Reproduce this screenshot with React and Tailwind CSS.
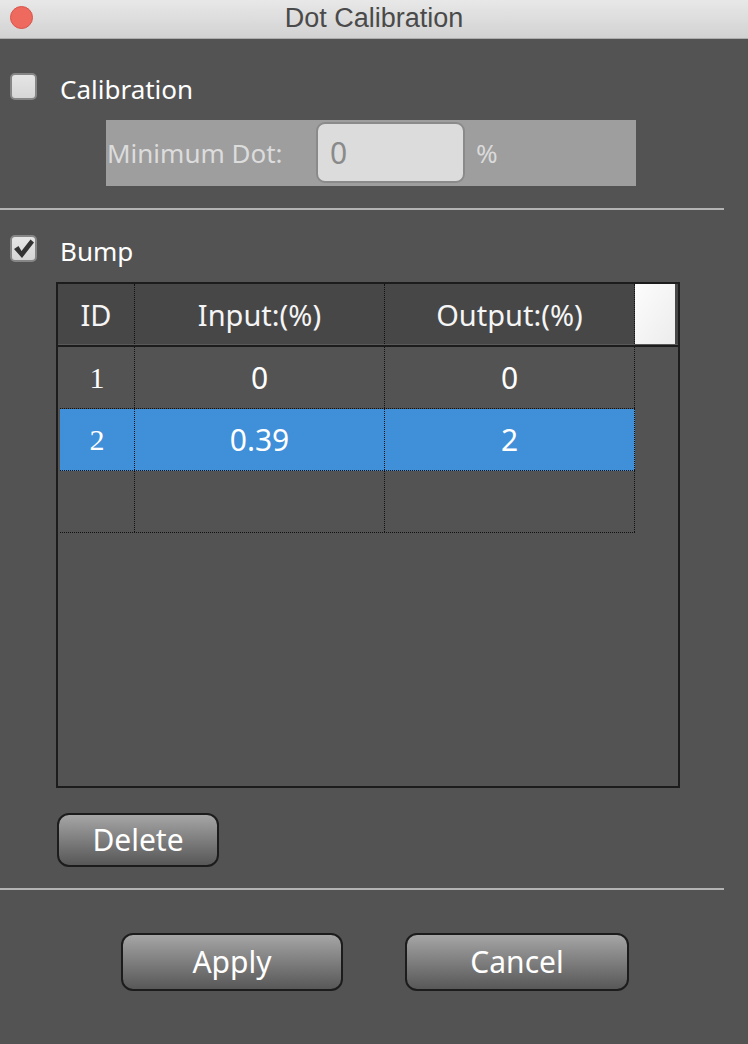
import React from 'react';

function CheckBox({ checked }) {
  return (
    <div className="w-[27px] h-[27px] shrink-0 rounded-[5px] border-2 border-[#868686] bg-gradient-to-b from-[#e6e6e6] to-[#d6d6d6] flex items-center justify-center">
      {checked && (
        <svg width="23" height="23" viewBox="0 0 23 23">
          <path d="M2 12 L6.5 9 L9.5 14 L18.5 2.5 L22 5.5 L10 21 Z" fill="#333333" />
        </svg>
      )}
    </div>
  );
}

function GrayButton({ label, className }) {
  return (
    <button
      className={`h-full rounded-[12px] border-2 border-[#1c1c1c] bg-gradient-to-b from-[#a6a6a6] to-[#585858] text-white text-[30px] leading-none flex items-center justify-center ${className}`}
    >
      {label}
    </button>
  );
}

const rows = [
  { id: '1', input: '0', output: '0' },
  { id: '2', input: '0.39', output: '2', selected: true },
  { id: '', input: '', output: '' },
];

export default function App() {
  return (
    <div className="w-[748px] h-[1044px] bg-[#535353] flex flex-col overflow-hidden font-['Noto_Sans',sans-serif]">
      {/* title bar */}
      <div className="h-[39px] shrink-0 border-b border-[#adadad] bg-gradient-to-b from-[#e8e8e8] to-[#d2d2d2] grid grid-cols-[1fr_auto_1fr]">
        <div className="pl-[10px] pt-[6px]">
          <div className="w-[23px] h-[23px] rounded-full bg-[#ee6a5e] border border-[#d8544a]" />
        </div>
        <div className="pt-[5px] text-[27px] leading-[27px] text-[#4a4a4a] font-['Liberation_Sans',sans-serif]">
          Dot Calibration
        </div>
        <div />
      </div>

      {/* calibration */}
      <div className="mt-[34px] pl-[10px] flex items-start">
        <CheckBox />
        <span className="ml-[23px] mt-[3px] text-[26px] leading-[26px] text-white">Calibration</span>
      </div>
      <div className="mt-[18px] ml-[106px] w-[530px] h-[66px] bg-[#9e9e9e] flex items-center">
        <span className="w-[210px] pl-[1px] text-[26px] leading-[26px] text-[#dcdcdc]">Minimum Dot:</span>
        <div className="w-[149px] h-[61px] mt-[-1px] rounded-[9px] border-2 border-[#8a8a8a] bg-[#dcdcdc] flex items-center pl-[12px] text-[30px] leading-none text-[#8a8a8a]">
          0
        </div>
        <span className="ml-[11px] text-[26px] leading-[26px] text-[#dadada]">%</span>
      </div>

      <div className="mt-[22px] w-[724px] h-[2px] bg-[#b3b3b3]" />

      {/* bump */}
      <div className="mt-[25px] pl-[10px] flex items-start">
        <CheckBox checked />
        <span className="ml-[23px] mt-[3px] text-[26px] leading-[26px] text-white">Bump</span>
      </div>

      {/* table */}
      <div className="mt-[18px] ml-[56px] w-[624px] h-[506px] shrink-0 border-[2.5px] border-[#1c1c1c] flex flex-col">
        <div className="h-[60px] flex bg-[#474747] text-[29px] leading-[29px] text-[#f5f5f5]">
          <div className="w-[77px] border-r border-dotted border-[#111111] flex items-center justify-center">ID</div>
          <div className="w-[250px] border-r border-dotted border-[#111111] flex items-center justify-center">Input:(%)</div>
          <div className="w-[250px] border-r border-dotted border-[#111111] flex items-center justify-center">Output:(%)</div>
          <div className="w-[40px] bg-gradient-to-br from-[#fdfdfd] to-[#ececec]" />
        </div>
        <div className="h-[1px] bg-[#595959]" />
        <div className="h-[2px] bg-[#1c1c1c]" />
        <div className="flex flex-col pl-[2px]">
          {rows.map((r, i) => (
            <div
              key={i}
              className={`h-[62px] w-[575px] flex border-b border-dotted border-[#111111] text-white ${r.selected ? 'bg-[#3f8fd9]' : ''}`}
            >
              <div className="w-[75px] border-r border-dotted border-[#111111] flex items-center justify-center text-[30px] leading-none font-['Liberation_Serif',serif]">
                {r.id}
              </div>
              <div className="w-[250px] border-r border-dotted border-[#111111] flex items-center justify-center text-[30px] leading-none">
                {r.input}
              </div>
              <div className="w-[250px] border-r border-dotted border-[#111111] flex items-center justify-center text-[30px] leading-none">
                {r.output}
              </div>
            </div>
          ))}
        </div>
      </div>

      <div className="mt-[25px] ml-[57px] h-[54px] flex">
        <GrayButton label="Delete" className="w-[162px]" />
      </div>

      <div className="mt-[21px] w-[724px] h-[2px] bg-[#b3b3b3]" />

      <div className="mt-[43px] ml-[121px] h-[58px] flex gap-[62px]">
        <GrayButton label="Apply" className="w-[222px]" />
        <GrayButton label="Cancel" className="w-[224px]" />
      </div>
    </div>
  );
}
